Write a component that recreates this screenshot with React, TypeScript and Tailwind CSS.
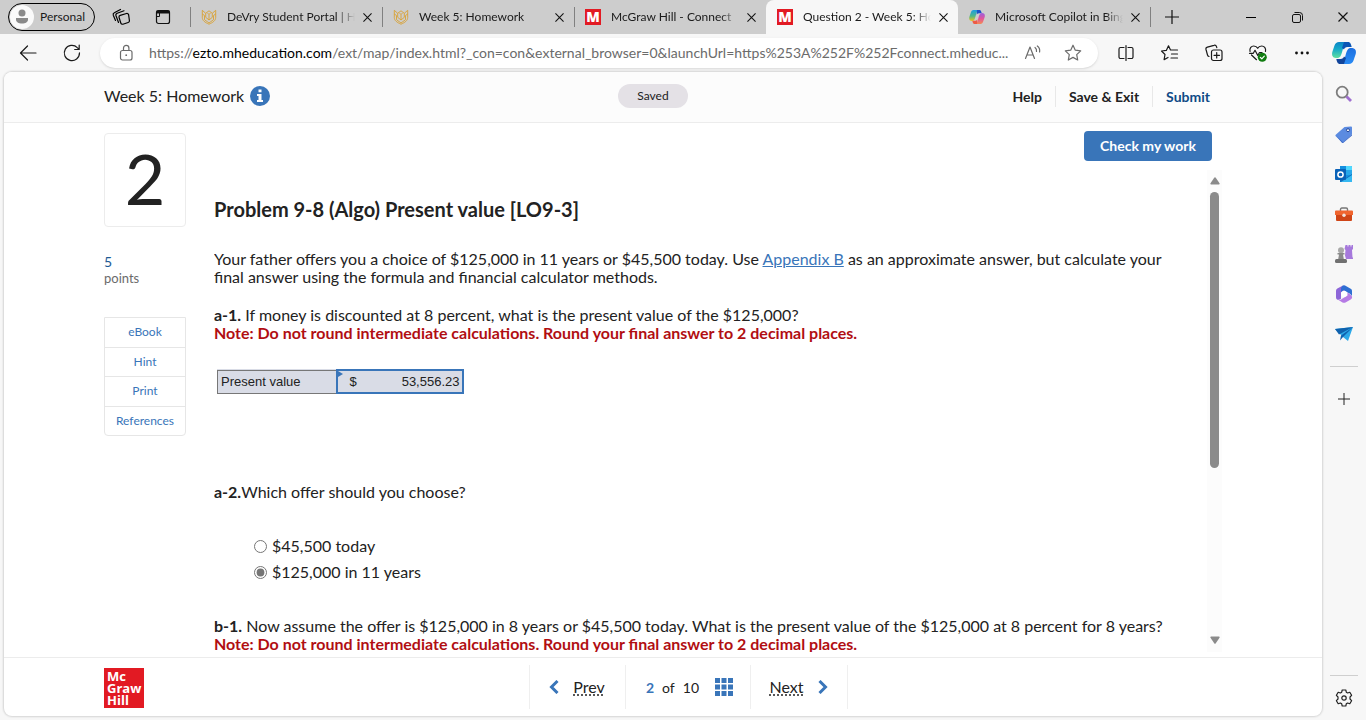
import type { ReactNode } from "react";

function VaultIcon() {
  return (
    <svg viewBox="0 0 16 16" className="size-4 shrink-0" fill="none" stroke="#d9a233" strokeWidth=".9" strokeLinejoin="round">
      <path d="M1.300 1.300v7.200c0 3 2.700 5 6.700 6.700 4-1.700 6.700-3.700 6.700-6.700V1.300L11.300 4.300v4L8 11 4.700 8.300v-4z" />
      <path d="M4.700 4.300L8 1.800l3.300 2.500M1.300 5l2.200 1.500v4.200L8 14l4.500-3.300V6.500L14.700 5M8 5.500V11M6.300 3.800L8 5.500l1.700-1.700" />
    </svg>
  );
}

function McIcon() {
  return (
    <span aria-hidden="true" className="flex size-4 shrink-0 items-center justify-center bg-[#e21a23] font-['Open_Sans',sans-serif] text-[14px] font-extrabold leading-4 text-white">
      M
    </span>
  );
}

function CopilotColorIcon() {
  return (
    <svg viewBox="0 0 16 16" className="size-4 shrink-0">
      <defs>
        <linearGradient id="cpa" x1="0" y1="0" x2="0" y2="1">
          <stop offset="0" stopColor="#1b9de2" /><stop offset=".55" stopColor="#4fb88a" /><stop offset="1" stopColor="#f0c419" />
        </linearGradient>
        <linearGradient id="cpb" x1="0" y1="0" x2="0" y2="1">
          <stop offset="0" stopColor="#9a5fe0" /><stop offset=".5" stopColor="#e0569c" /><stop offset="1" stopColor="#f58a52" />
        </linearGradient>
      </defs>
      <path fill="url(#cpa)" d="M4.500 1h5.300C8 1.500 7.500 4 6.500 7.500 5.700 10.500 5 12 3 12 .5 12-.2 10.300.3 8L2 3c.5-1.300 1.300-2 2.500-2z" />
      <path fill="#1d52c9" d="M8 1h2.500c1.500 0 1.700 1.500 2.200 3.200H10c-1.500 0-2 .8-2.300 1.800z" />
      <path fill="url(#cpb)" d="M11.500 15H6.200c1.800-.5 2.300-3 3.300-6.500C10.300 5.500 11 4 13 4c2.500 0 3.200 1.700 2.700 4L14 13c-.5 1.300-1.300 2-2.500 2z" />
      <path fill="#ee5a45" d="M8 15H5.500c-1.500 0-1.700-1.500-2.200-3.200H6c1.500 0 2-.8 2.300-1.800z" />
    </svg>
  );
}

function CopilotBlueIcon() {
  return (
    <svg viewBox="0 0 24 22" className="h-[22px] w-6">
      <defs>
        <linearGradient id="cqa" x1="0" y1="0" x2="0" y2="1">
          <stop offset="0" stopColor="#0a84c6" /><stop offset=".45" stopColor="#16aac9" /><stop offset="1" stopColor="#5fe0a0" />
        </linearGradient>
        <linearGradient id="cqb" x1="0" y1="0" x2="0" y2="1">
          <stop offset="0" stopColor="#1d6fe0" /><stop offset="1" stopColor="#2a8cf5" />
        </linearGradient>
      </defs>
      <path fill="url(#cqa)" d="M7 0h9c-3 .5-4 3.500-5.500 8.500C9.200 13.500 8.300 16 5 16c-4.500 0-5.500-2.500-4.700-6L2.500 3.500C3.300 1.200 4.800 0 7 0z" />
      <path fill="#0b56b5" d="M12 0h4c2.500 0 3 2.200 3.700 5h-4.200c-2 0-3 1-3.500 2.500L10 6z" />
      <path fill="url(#cqb)" d="M17 22H8c3-.5 4-3.500 5.500-8.500C14.800 8.500 15.700 6 19 6c4.500 0 5.500 2.500 4.700 6l-2.200 6.500C20.700 20.800 19.200 22 17 22z" />
      <path fill="#12459c" d="M12 22H8c-2.500 0-3-2.200-3.700-5h4.200c2 0 3-1 3.500-2.500l2 1.500z" />
    </svg>
  );
}

function Line({ children, className = "size-5" }: { children: ReactNode; className?: string }) {
  return (
    <svg viewBox="0 0 20 20" className={className} fill="none" stroke="currentColor" strokeWidth="1.200" strokeLinecap="round" strokeLinejoin="round">
      {children}
    </svg>
  );
}

function CloseX({ className = "size-[9px]" }: { className?: string }) {
  return (
    <svg viewBox="0 0 10 10" className={className} stroke="#111" strokeWidth="1.200">
      <path d="M.5.5l9 9M9.500.5l-9 9" />
    </svg>
  );
}

function Tab({ icon, title, active, divider }: { icon: ReactNode; title: string; active?: boolean; divider?: boolean }) {
  return (
    <div className={`relative flex h-full w-48 min-w-0 items-center pl-[11px] pr-[10px] ${active ? "rounded-t-lg bg-[#f7f7f7]" : ""}`}>
      {divider && <span className="absolute left-0 top-[7px] h-5 w-px bg-[#808080]" />}
      {icon}
      <button className="ml-2.5 min-w-0 flex-1 overflow-hidden whitespace-nowrap text-left text-[12px] leading-4 text-[#1a1a1a] [mask-image:linear-gradient(to_right,black_86%,transparent)]">
        {title}
      </button>
      <button aria-label={`Close ${title}`} className="ml-2 shrink-0"><CloseX /></button>
    </div>
  );
}

function TitleBar() {
  return (
    <header className="flex h-[34px] shrink-0 items-stretch bg-[#cdcdcd]">
      <div className="flex w-[190px] shrink-0 items-center pl-2">
        <button className="flex h-7 w-[87px] items-center gap-[6px] rounded-full border border-black pl-px text-[12px] text-[#1a1a1a]">
          <svg viewBox="0 0 24 24" className="size-6">
            <circle cx="12" cy="12" r="12" fill="#fafafa" />
            <circle cx="12" cy="8" r="3.500" fill="#8a8a8a" />
            <path fill="#8a8a8a" d="M6 13h12v1.500C18 17 15.500 18.500 12 18.500S6 17 6 14.500z" />
          </svg>
          Personal
        </button>
        <button aria-label="Workspaces" className="ml-4">
          <Line className="size-5">
            <path d="M9.200 8.300l6.300-1.800a1.700 1.700 0 012.100 1.200l.8 5.800a1.700 1.700 0 01-1.200 2l-5.300 1.700a1.700 1.700 0 01-2.100-1.200L8 10.300a1.700 1.700 0 011.200-2z" />
            <path d="M7.500 15.500L5 8.800a2 2 0 011.200-2.500L13 3.800M4.500 13.500L2.300 8.300a2 2 0 011-2.500L9.500 2.500" />
          </Line>
        </button>
        <button aria-label="Tab actions" className="ml-[22px]">
          <svg viewBox="0 0 20 20" className="size-5" fill="none" stroke="#111">
            <rect x="3.500" y="3.500" width="13" height="13" rx="2" strokeWidth="1.200" />
            <path d="M3.500 5h13" strokeWidth="3" /><path d="M6.500 6v3.500h-3" />
          </svg>
        </button>
      </div>
      <nav aria-label="Tabs" className="flex min-w-0">
        <Tab icon={<VaultIcon />} title="DeVry Student Portal | Home" divider />
        <Tab icon={<VaultIcon />} title="Week 5: Homework" divider />
        <Tab icon={<McIcon />} title="McGraw Hill - Connect" divider />
        <Tab icon={<McIcon />} title="Question 2 - Week 5: Homework" active />
        <Tab icon={<CopilotColorIcon />} title="Microsoft Copilot in Bing" />
      </nav>
      <button aria-label="New tab" className="relative flex w-11 shrink-0 items-center justify-center">
        <span className="absolute left-0 top-[7px] h-5 w-px bg-[#808080]" />
        <svg viewBox="0 0 14 14" className="size-3.5" stroke="#111" strokeWidth="1.200"><path d="M7 0v14M0 7h14" /></svg>
      </button>
      <div className="ml-auto flex shrink-0">
        <button aria-label="Minimize" className="flex w-[46px] items-center justify-center"><span className="h-px w-2.5 bg-black" /></button>
        <button aria-label="Restore" className="flex w-[46px] items-center justify-center">
          <svg viewBox="0 0 11 11" className="size-[11px]" fill="none" stroke="#111"><rect x=".5" y="2.500" width="8" height="8" rx="1.500" /><path d="M2.500.5h5a3 3 0 013 3v5" /></svg>
        </button>
        <button aria-label="Close window" className="flex w-[46px] items-center justify-center"><CloseX className="size-2.5" /></button>
      </div>
    </header>
  );
}

function Toolbar() {
  return (
    <div className="flex h-[38px] shrink-0 items-center pl-[18px] text-[#1a1a1a]">
      <button aria-label="Back">
        <Line><path d="M18 10H2.500M9.500 3L2.500 10l7 7" /></Line>
      </button>
      <button aria-label="Refresh" className="ml-6">
        <Line><path d="M17.500 9.800A7.600 7.600 0 1115.300 4.600L17 6.200M17.200 2v4.500h-4.500" /></Line>
      </button>
      <div className="ml-[18px] flex h-[30px] min-w-0 flex-1 items-center rounded-full bg-white pl-4 pr-[15px] text-[#6b6b6b] shadow-sm">
        <Line className="size-5 shrink-0">
          <rect x="4.500" y="7.500" width="11.500" height="9.500" rx="2" /><path d="M7.500 7V5a2.700 2.700 0 015.400 0v2" /><circle cx="10.200" cy="12.200" r=".9" fill="currentColor" stroke="none" />
        </Line>
        <div className="ml-[13px] min-w-0 flex-1 overflow-hidden text-ellipsis whitespace-nowrap text-[14px] leading-5">
          https://<span className="text-black">ezto.mheducation.com</span>/ext/map/index.html?_con=con&amp;external_browser=0&amp;launchUrl=https%253A%252F%252Fconnect.mheduc...
        </div>
        <button aria-label="Read aloud" className="ml-3">
          <Line><path d="M2.500 15.500L7 4l4.500 11.500M4 12h6M12 4.500c1.300 1 1.800 2.300 1.500 4M14.300 3c2 1.500 2.700 3.500 2.300 6" /></Line>
        </button>
        <button aria-label="Add to favorites" className="ml-5">
          <Line><path d="M10 2.200l2.300 5 5.400.7-4 3.700 1 5.400L10 14.400 5.300 17l1-5.400-4-3.700 5.400-.7z" /></Line>
        </button>
      </div>
      <div className="flex w-[224px] shrink-0 items-center gap-6 pl-[18px]">
        <button aria-label="Split screen" className="w-5"><Line><path d="M8 4.500H4.500a1.500 1.500 0 00-1.500 1.500v8a1.500 1.500 0 001.500 1.500H8M12 4.500h3.500A1.500 1.500 0 0117 6v8a1.500 1.500 0 01-1.500 1.500H12M10 2.500v15" /></Line></button>
        <button aria-label="Favorites" className="w-5"><Line><path d="M10.500 7L8.500 2.800l-2.200 4.600-4.800.6 3.500 3.500-.9 5.100L8 14.500M10.500 7h7M11.500 11h6M11 15h6.500" /></Line></button>
        <button aria-label="Collections" className="w-5"><Line><rect x="7.500" y="7" width="10.500" height="10.500" rx="2" /><path d="M12.700 9.500v5.500M10 12.300h5.500M5 13.500A2 2 0 013.500 12L2 6.500a2 2 0 011.400-2.400L10 2.300a2 2 0 012.500 1.300l.3 1" /></Line></button>
        <button aria-label="Browser essentials" className="w-5">
          <Line>
            <path d="M2 8.500C1.300 5 3.500 3 5.700 3 7.500 3 9 4 9.700 5.300 10.400 4 12 3 13.700 3c2.300 0 4.500 2 3.800 5.500M3.500 12l5 4.700M1.500 10.300h3.800l1.700-3 2.800 5.200 1.700-3H14" />
            <circle cx="14.300" cy="14.300" r="4.500" fill="#107c10" stroke="none" /><path stroke="#fff" d="M12.300 14.400l1.500 1.400 2.500-2.700" />
          </Line>
        </button>
        <button aria-label="Settings and more" className="w-5"><svg viewBox="0 0 20 20" className="size-5" fill="#111"><circle cx="4.500" cy="10" r="1.400" /><circle cx="10" cy="10" r="1.400" /><circle cx="15.500" cy="10" r="1.400" /></svg></button>
      </div>
      <button aria-label="Copilot" className="flex w-11 shrink-0 justify-center"><CopilotBlueIcon /></button>
    </div>
  );
}

function SideBar() {
  return (
    <aside className="flex w-11 shrink-0 flex-col items-center pb-[13px] pt-[13px]">
      <div className="flex flex-col gap-[22px]">
        <button aria-label="Search"><svg viewBox="0 0 18 18" className="size-[18px]" fill="none"><circle cx="7.200" cy="7.200" r="5.500" stroke="#7d7d7d" strokeWidth="1.800" /><path d="M11.500 11.500l4.500 4.500" stroke="#a070d0" strokeWidth="2.800" /></svg></button>
        <button aria-label="Shopping"><svg viewBox="0 0 18 18" className="size-[18px]"><path fill="#5b8be0" d="M9.500 2L16 1.500a1 1 0 011 1V9l-8.300 8a1.300 1.300 0 01-2 0L1 11.500a1.300 1.300 0 010-2z" /><path fill="#3e6ccb" d="M1 10.500l7 6.700 9-8.200v1.500l-8.300 7a1.300 1.300 0 01-2 0z" /><circle cx="13" cy="5.200" r="1.500" fill="#fff" stroke="#264a9b" /></svg></button>
        <button aria-label="Outlook"><svg viewBox="0 0 18 18" className="size-[18px]"><path fill="#1490df" d="M5 1h11a1 1 0 011 1v14H5z" /><path fill="#50d9ff" d="M11 1h5a1 1 0 011 1v3h-6z" /><path fill="#28a8ea" d="M11 5h6v5h-6z" /><path fill="#0f6cbd" d="M5 9l6 4 6-4v8H5z" /><path fill="#35b8f1" d="M17 10v7H6z" /><rect y="4" width="11" height="11" rx="1" fill="#0a62b8" /><circle cx="5.500" cy="9.500" r="2.600" fill="none" stroke="#fff" strokeWidth="1.500" /></svg></button>
        <button aria-label="Tools"><svg viewBox="0 0 18 18" className="size-[18px]"><path fill="none" stroke="#777" strokeWidth="1.400" d="M5.500 6V4.300A1.300 1.300 0 016.800 3h4.400a1.300 1.300 0 011.300 1.300V6" /><path fill="#f0652f" d="M1 5.500h16a1 1 0 011 1V10H0V6.500a1 1 0 011-1z" /><path fill="#cf4517" d="M1 10h16v5a1 1 0 01-1 1H2a1 1 0 01-1-1z" /><circle cx="9" cy="10.300" r="1.700" fill="#f0e4df" /></svg></button>
        <button aria-label="Games"><svg viewBox="0 0 18 18" className="size-[18px]"><path fill="#a679dc" d="M10.500 0h2v1.500h1V0h2v1.500h1V0H18v4l-1 1 .5 7.500h.5V14h-7l-1-3.500.5-5.500-1-1z" /><circle cx="6" cy="5.200" r="3" fill="#a8a8a8" /><path fill="#8b8b8b" d="M2.500 8h7v1.500H8l.8 4.500H3.200L4 9.500H2.500z" /><rect y="14" width="12" height="4" rx="1.500" fill="#707070" /></svg></button>
        <button aria-label="Microsoft 365"><svg viewBox="0 0 18 18" className="size-[18px]"><path fill="#8d66d8" d="M7.500.7L2.300 3.600A2.500 2.500 0 001 5.800v6.400c0 2 1.500 2.800 3 2.500l2-1V7.500L11 4V1z" /><path fill="#2f6fd3" d="M7.500.7a3 3 0 013 0l5.200 3A2.500 2.500 0 0117 5.800v5.500c-1-2-2-2.300-3.500-3.200L8.500 5 6 7V3z" /><path fill="#b67be5" d="M17 11.500a2.500 2.500 0 01-1.300 2.900l-5.200 3a3 3 0 01-3 0l-4-2.500c2 .2 3-.8 4.500-1.700l4.500-2.700V7.500l2.500 1.700z" /><circle cx="9" cy="9" r="3" fill="#fff" /></svg></button>
        <button aria-label="Drop"><svg viewBox="0 0 18 18" className="size-[18px]"><path fill="#2ba8e8" d="M0 4l18-2-5 14-5-4z" /><path fill="#0f62ae" d="M0 4l18-2L4 9.500zM18 2L6 10.500l-1 5 3-3.500z" /></svg></button>
      </div>
      <div className="mt-[23px] h-px w-7 bg-[#cfcfcf]" />
      <button aria-label="Customize" className="mt-[26px]"><svg viewBox="0 0 12 12" className="size-3" stroke="#222"><path d="M6 0v12M0 6h12" /></svg></button>
      <div className="mt-auto h-px w-7 bg-[#cfcfcf]" />
      <button aria-label="Settings" className="mt-[13px]">
        <svg viewBox="0 0 18 18" className="size-[18px]" fill="none" stroke="#222" strokeWidth="1.200" strokeLinejoin="round"><circle cx="9" cy="9" r="2.200" /><path d="M7.200 1h3.600l.5 2.200 1.300.8 2.200-.7 1.800 3-1.600 1.700v2l1.600 1.700-1.800 3-2.200-.7-1.300.8-.5 2.200H7.200l-.5-2.200-1.300-.8-2.200.7-1.800-3L3 10V8L1.400 6.300l1.800-3 2.200.7 1.300-.8z" /></svg>
      </button>
    </aside>
  );
}

function Note() {
  return <strong className="block text-[#b10e12]">Note: Do not round intermediate calculations. Round your final answer to 2 decimal places.</strong>;
}

const tools = ["eBook", "Hint", "Print", "References"];

export default function App() {
  return (
    <div className="flex h-screen flex-col overflow-hidden bg-[#f7f7f7] font-['Lato','Noto_Sans',sans-serif]">
      <TitleBar />
      <Toolbar />
      <div className="flex min-h-0 flex-1">
        <section className="mb-1 ml-1 flex min-w-0 flex-1 flex-col overflow-hidden rounded-lg bg-white text-[#222] shadow-[0_0_2px_1px_rgba(0,0,0,0.14)]">
          <header className="grid h-[51px] shrink-0 grid-cols-[1fr_auto_1fr] items-center border-b border-[#ececec] bg-[#fcfcfc] pb-0.5 pl-[100px] pr-[112px]">
            <div className="flex items-center gap-[6px]">
              <h1 className="text-[16px] leading-5">Week 5: Homework</h1>
              <button aria-label="Assignment information">
                <svg viewBox="0 0 20 20" className="size-5"><circle cx="10" cy="10" r="10" fill="#3975b9" /><path fill="#fff" d="M8.500 3.500h3v2.800h-3zM7 8h4.500v6H13v2H7v-2h1.500v-4H7z" /></svg>
              </button>
            </div>
            <span className="mr-2 flex h-6 w-[70px] items-center justify-center rounded-full bg-[#e4e1e6] text-[12px]">Saved</span>
            <nav className="flex h-5 items-center justify-end text-[14px] font-bold">
              <button className="pr-[13px]">Help</button>
              <button className="border-l border-[#e8e8e8] px-[13px]">Save &amp; Exit</button>
              <button className="border-l border-[#e8e8e8] pl-[13px] text-[#0f4a86]">Submit</button>
            </nav>
          </header>

          <div className="flex min-h-0 flex-1 pl-[100px] pr-[100px]">
            <aside className="w-[82px] shrink-0 pt-[10px]">
              <div className="flex h-[94px] items-center justify-center rounded border border-[#ececec] pb-1 text-[70px] leading-none">2</div>
              <p className="mt-[27px] text-[14px] leading-4 text-[#1d5a94]">5</p>
              <p className="text-[13px] leading-4 text-[#6b6b6b]">points</p>
              <ul className="mt-[31px] flex h-[119px] flex-col divide-y divide-[#e6e6e6] rounded-b border border-[#e6e6e6] text-center text-[12px] leading-4 text-[#3975b9]">
                {tools.map((t) => (
                  <li key={t} className="flex-1"><button className="h-full w-full">{t}</button></li>
                ))}
              </ul>
            </aside>

            <main className="ml-7 flex min-w-0 flex-1 flex-col pt-2">
              <button className="mr-[10px] h-[30px] w-32 shrink-0 self-end rounded-sm bg-[#3975b9] pb-0.5 text-[14px] font-bold text-white">Check my work</button>
              <div className="mb-[5px] mt-[9px] flex min-h-0 flex-1">
                <div className="min-w-0 flex-1 overflow-hidden pt-[27px] text-[16px] leading-[18px]">
                  <h2 className="text-[20px] font-bold leading-6">Problem 9-8 (Algo) Present value [LO9-3]</h2>
                  <p className="mt-[29px] max-w-[960px]">
                    Your father offers you a choice of $125,000 in 11 years or $45,500 today. Use{" "}
                    <a href="#appendix" className="text-[#3975b9] underline">Appendix B</a> as an approximate answer, but calculate your final answer using the formula and financial calculator methods.
                  </p>
                  <p className="mt-5"><b>a-1.</b> If money is discounted at 8 percent, what is the present value of the $125,000?</p>
                  <Note />
                  <table className="ml-[3px] mt-[27px] border-collapse bg-[#d9dce6] font-['Liberation_Sans',sans-serif] text-[13px] leading-4">
                    <tbody>
                      <tr className="h-[23px]">
                        <th scope="row" className="w-[119px] border border-[#777] pl-[3px] text-left font-normal"><label htmlFor="pv">Present value</label></th>
                        <td className="relative w-[126px] border-2 border-[#3975b9] p-0">
                          <svg viewBox="0 0 5 6" className="absolute left-0 top-0 h-1.5 w-[5px]"><path fill="#3975b9" d="M0 0l5 3-5 3z" /></svg>
                          <div className="flex items-center pl-3 pr-[2px]">
                            $<input id="pv" defaultValue="53,556.23" className="w-0 min-w-0 flex-1 bg-transparent text-right outline-none" />
                          </div>
                        </td>
                      </tr>
                    </tbody>
                  </table>
                  <p className="mt-[89px]"><b>a-2.</b>Which offer should you choose?</p>
                  <fieldset className="ml-10 mt-8">
                    <label className="flex h-[26px] items-center gap-[5px]"><input type="radio" name="offer" className="size-[13px] accent-[#757575]" />$45,500 today</label>
                    <label className="flex h-[26px] items-center gap-[5px]"><input type="radio" name="offer" defaultChecked className="size-[13px] accent-[#757575]" />$125,000 in 11 years</label>
                  </fieldset>
                  <p className="mt-8"><b>b-1.</b> Now assume the offer is $125,000 in 8 years or $45,500 today. What is the present value of the $125,000 at 8 percent for 8 years?</p>
                  <Note />
                </div>
                <div className="flex w-[15px] shrink-0 flex-col items-center bg-[#fcfcfc] pb-2 pt-[7px]">
                  <svg viewBox="0 0 10 8" className="h-2 w-2.5" fill="#8b8b8b"><path d="M4.200.8a1 1 0 011.600 0L9.500 6.200c.4.700 0 1.300-.7 1.300H1.200c-.7 0-1.100-.6-.7-1.300z" /></svg>
                  <div className="mt-[7px] h-[59%] w-[9px] rounded-full bg-[#8b8b8b]" />
                  <svg viewBox="0 0 10 8" className="mt-auto h-2 w-2.5" fill="#8b8b8b"><path d="M4.200 7.200a1 1 0 001.600 0L9.500 1.800C9.900 1.100 9.500.5 8.800.5H1.200C.5.5.1 1.100.5 1.800z" /></svg>
                </div>
              </div>
            </main>
          </div>

          <footer className="flex h-[59px] shrink-0 items-center border-t border-[#ececec] px-[100px]">
            <div className="mt-0.5 flex size-10 shrink-0 flex-col justify-center bg-[#e21a23] pl-[3px] font-['Open_Sans',sans-serif] text-[13px] font-bold leading-3 text-white">
              <span>Mc</span><span>Graw</span><span>Hill</span>
            </div>
            <nav aria-label="Questions" className="flex flex-1 items-center justify-center pl-2.5 text-[16px]">
              <div className="flex divide-x divide-[#efefef] border-x border-[#efefef]">
                <button className="flex h-11 w-24 items-center justify-center gap-[14px]">
                  <svg viewBox="0 0 10 14" className="h-3.5 w-2.5" fill="none" stroke="#3975b9" strokeWidth="3"><path d="M8.500 1L2.500 7l6 6" /></svg>
                  <span className="underline decoration-dotted underline-offset-2">Prev</span>
                </button>
                <div className="flex h-11 w-[125px] items-center justify-center gap-2 pl-1 text-[14px]">
                  <b className="text-[#3975b9]">2</b><span>of</span><span>10</span>
                  <button aria-label="Question list" className="ml-2">
                    <svg viewBox="0 0 18 18" className="size-[18px]" fill="#3975b9"><path d="M0 0h5v5H0zM6.500 0h5v5h-5zM13 0h5v5h-5zM0 6.500h5v5H0zM6.500 6.500h5v5h-5zM13 6.500h5v5h-5zM0 13h5v5H0zM6.500 13h5v5h-5zM13 13h5v5h-5z" /></svg>
                  </button>
                </div>
                <button className="flex h-11 w-24 items-center justify-center gap-[14px]">
                  <span className="underline decoration-dotted underline-offset-2">Next</span>
                  <svg viewBox="0 0 10 14" className="h-3.5 w-2.5" fill="none" stroke="#3975b9" strokeWidth="3"><path d="M1.500 1l6 6-6 6" /></svg>
                </button>
              </div>
            </nav>
          </footer>
        </section>
        <SideBar />
      </div>
    </div>
  );
}
